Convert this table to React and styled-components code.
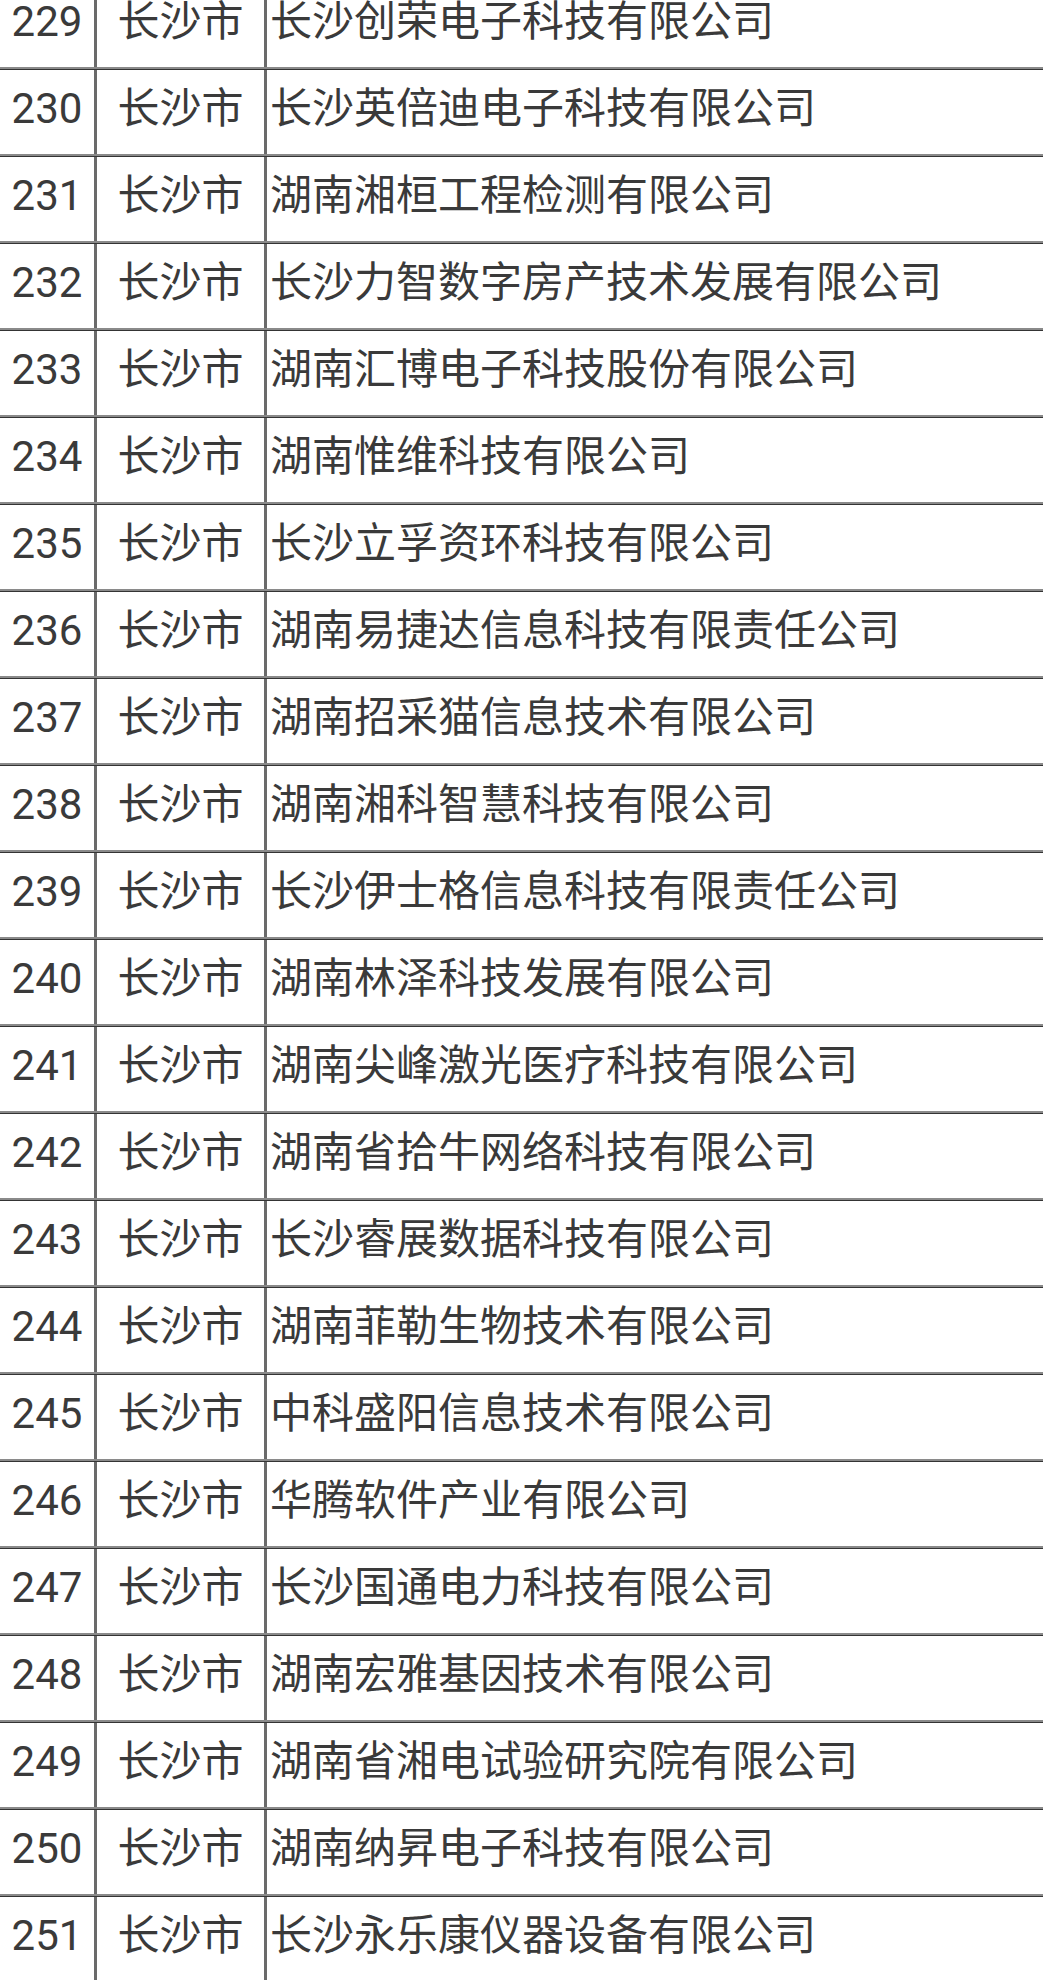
import React from 'react';
import styled, { createGlobalStyle } from 'styled-components';

const GlobalStyle = createGlobalStyle`
  html, body {
    margin: 0;
    padding: 0;
    background: #ffffff;
  }
  body {
    font-family: Roboto, "Noto Sans CJK SC", sans-serif;
    overflow: hidden;
  }
`;

const Table = styled.div`
  width: 1043px;
  margin-top: -18px;
  color: #3a3a3a;
  font-size: 42px;
`;

const Row = styled.div`
  display: grid;
  grid-template-columns: 97px 170px 1fr;
  height: 87px;
  box-sizing: border-box;
  border-top: 1px solid #343434;
  border-bottom: 2px solid #8a8a8a;
`;

const Cell = styled.div`
  display: flex;
  align-items: center;
  justify-content: ${p => (p.$left ? 'flex-start' : 'center')};
  padding-left: ${p => (p.$left ? '3px' : '0')};
  padding-bottom: 6px;
  box-sizing: border-box;
  border-right: ${p => (p.$last ? 'none' : '3px solid #6a6a6a')};
  line-height: 1.2;
  white-space: nowrap;
  overflow: hidden;
`;

const companies = [
  '长沙创荣电子科技有限公司',
  '长沙英倍迪电子科技有限公司',
  '湖南湘桓工程检测有限公司',
  '长沙力智数字房产技术发展有限公司',
  '湖南汇博电子科技股份有限公司',
  '湖南惟维科技有限公司',
  '长沙立孚资环科技有限公司',
  '湖南易捷达信息科技有限责任公司',
  '湖南招采猫信息技术有限公司',
  '湖南湘科智慧科技有限公司',
  '长沙伊士格信息科技有限责任公司',
  '湖南林泽科技发展有限公司',
  '湖南尖峰激光医疗科技有限公司',
  '湖南省拾牛网络科技有限公司',
  '长沙睿展数据科技有限公司',
  '湖南菲勒生物技术有限公司',
  '中科盛阳信息技术有限公司',
  '华腾软件产业有限公司',
  '长沙国通电力科技有限公司',
  '湖南宏雅基因技术有限公司',
  '湖南省湘电试验研究院有限公司',
  '湖南纳昇电子科技有限公司',
  '长沙永乐康仪器设备有限公司',
];

const App = () => (
  <>
    <GlobalStyle />
    <Table>
      {companies.map((name, i) => (
        <Row key={i}>
          <Cell>{229 + i}</Cell>
          <Cell>长沙市</Cell>
          <Cell $left $last>{name}</Cell>
        </Row>
      ))}
    </Table>
  </>
);

export default App;
